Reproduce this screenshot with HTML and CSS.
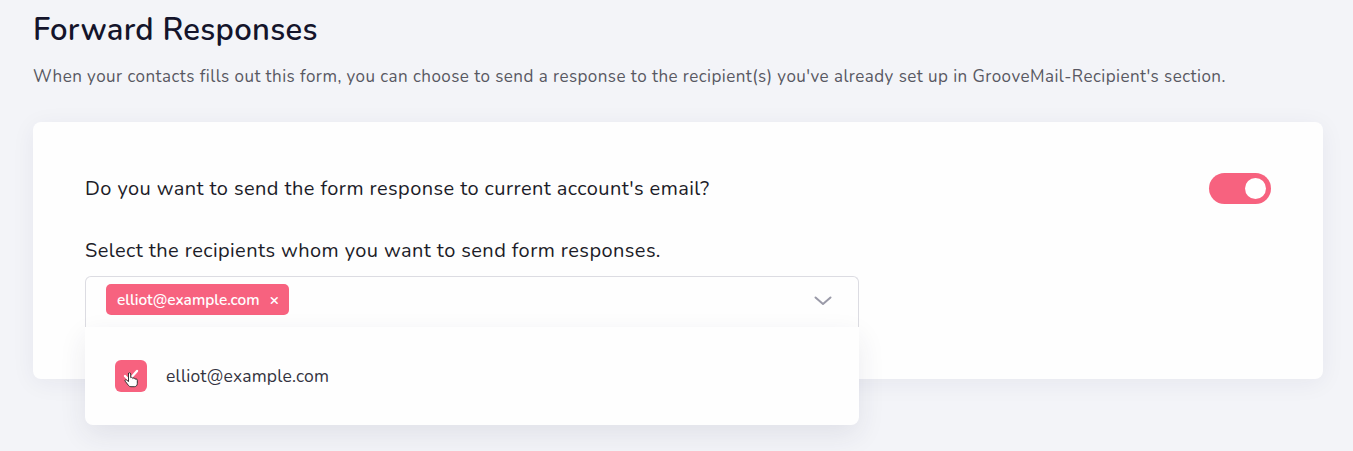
FILE: index.html
```html
<!DOCTYPE html>
<html>
<head>
<meta charset="utf-8">
<link rel="stylesheet" href="styles.css">
</head>
<body>
<div class="page">
  <h1 class="title">Forward Responses</h1>
  <p class="subtitle">When your contacts fills out this form, you can choose to send a response to the recipient(s) you've already set up in GrooveMail-Recipient's section.</p>
  <div class="card">
    <div class="row">
      <span class="question">Do you want to send the form response to current account's email?</span>
      <span class="toggle"><span class="knob"></span></span>
    </div>
    <div class="label">Select the recipients whom you want to send form responses.</div>
    <div class="select-wrap">
      <div class="select">
        <span class="tag">elliot@example.com <span class="x">×</span></span>
        <svg class="chev" width="18" height="10" viewBox="0 0 18 10"><path d="M1.5 1.5 L9 8 L16.5 1.5" fill="none" stroke="#9a9aa8" stroke-width="2" stroke-linecap="round" stroke-linejoin="round"/></svg>
      </div>
      <div class="menu">
        <div class="option">
          <span class="check">
            <svg width="32" height="32" viewBox="0 0 32 32">
              <path d="M10 16 L14 20 L22 11" fill="none" stroke="#fff" stroke-width="2.4" stroke-linecap="round" stroke-linejoin="round"/>
              <path d="M13.5 13.5 v8 l-2 -1.5 c-1 -0.7 -2 0.3 -1.3 1.2 l3.3 4.3 c0.6 0.8 1.4 1.2 2.4 1.2 h3.4 c1.7 0 3 -1.3 3 -3 v-3.5 c0 -0.8 -0.6 -1.3 -1.3 -1.3 c-0.4 0 -0.7 0.2 -0.9 0.4 c0 -0.8 -0.6 -1.3 -1.3 -1.3 c-0.4 0 -0.8 0.2 -1 0.5 c-0.1 -0.7 -0.7 -1.2 -1.3 -1.2 c-0.3 0 -0.6 0.1 -0.8 0.3 v-3.6 c0 -0.7 -0.6 -1.2 -1.2 -1.2 c-0.7 0 -1.2 0.5 -1.2 1.2 z" fill="#fff" stroke="#222" stroke-width="0.9" stroke-linejoin="round"/>
            </svg>
          </span>
          <span class="opt-text">elliot@example.com</span>
        </div>
      </div>
    </div>
  </div>
</div>
</body>
</html>
```

FILE: styles.css
```css
* { box-sizing: border-box; }
html, body { margin: 0; padding: 0; }
body {
  background: #f3f4f8;
  font-family: "Nunito", Lato, "Open Sans", sans-serif;
  width: 1353px;
  height: 451px;
  overflow: hidden;
}
.page {
  padding: 12px 30px 0 33px;
}
.title {
  margin: 0;
  font-size: 31px;
  font-weight: 600;
  color: #14142b;
  line-height: 36px;
  letter-spacing: 0.3px;
}
.subtitle {
  margin: 18px 0 0 0;
  font-size: 17px;
  line-height: 22px;
  color: #585862;
  letter-spacing: 0.45px;
}
.card {
  margin-top: 34px;
  width: 1290px;
  height: 257px;
  background: #fefefe;
  border-radius: 8px;
  box-shadow: 0 4px 24px rgba(40, 40, 80, 0.06);
  padding: 50px 52px 0 52px;
}
.row {
  display: flex;
  justify-content: space-between;
  align-items: center;
  height: 32px;
}
.question {
  font-size: 20px;
  color: #1c1c28;
  letter-spacing: 0.42px;
}
.toggle {
  width: 62px;
  height: 31px;
  border-radius: 16px;
  background: #f7627f;
  display: flex;
  align-items: center;
  justify-content: flex-end;
  padding-right: 5px;
}
.knob {
  width: 21px;
  height: 21px;
  border-radius: 50%;
  background: #fff;
}
.label {
  margin-top: 35px;
  font-size: 20px;
  color: #1c1c28;
  letter-spacing: 0.42px;
  line-height: 24px;
}
.select-wrap {
  position: relative;
  margin-top: 13px;
  width: 774px;
}
.select {
  height: 52px;
  border: 1px solid #dcdce2;
  border-bottom: none;
  border-radius: 6px 6px 0 0;
  display: flex;
  align-items: flex-start;
  justify-content: space-between;
  padding: 7px 26px 0 20px;
}
.tag {
  display: inline-flex;
  align-items: center;
  height: 31px;
  padding: 0 10px 0 11px;
  border-radius: 5px;
  background: #f7627f;
  color: #fff;
  font-size: 15.4px;
  font-weight: 600;
  gap: 10px;
}
.x {
  font-size: 16px;
  font-weight: 700;
}
.chev {
  margin-top: 12px;
}
.menu {
  position: absolute;
  left: 0;
  top: 51px;
  width: 774px;
  height: 98px;
  background: #fefefe;
  border-radius: 0 0 8px 8px;
  box-shadow: 0 10px 28px rgba(40, 40, 80, 0.09);
  display: flex;
  align-items: center;
  padding: 0 0 0 30px;
}
.option {
  display: flex;
  align-items: center;
  gap: 19px;
}
.check {
  width: 32px;
  height: 32px;
  border-radius: 6px;
  background: #f7627f;
  display: flex;
}
.opt-text {
  font-size: 17.5px;
  color: #333340;
  letter-spacing: 0.2px;
}
```
